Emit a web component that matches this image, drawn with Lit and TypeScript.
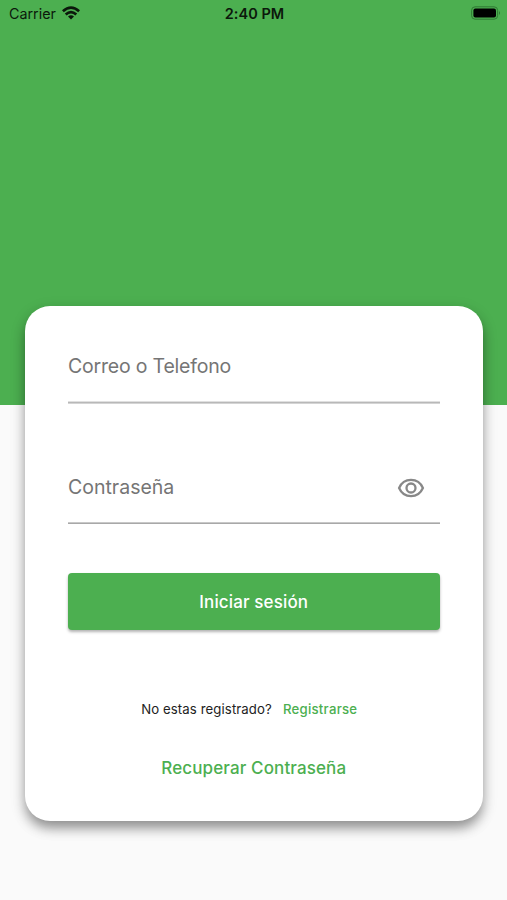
import { LitElement, html, css } from "lit";
import { customElement } from "lit/decorators.js";

@customElement("app-root")
class AppRoot extends LitElement {
  static styles = css`
    :host { display: block; height: 900px; overflow: hidden; font-family: Inter, sans-serif;
      background: linear-gradient(#4caf50 405px, #fafafa 405.5px); color: #222; }
    * { box-sizing: border-box; }
    .status { height: 28px; display: grid; grid-template-columns: 1fr auto 1fr; align-items: center; padding: 0 6px 2px 9px; color: #0b180b; font-size: 14.3px; }
    .left { display: flex; align-items: center; gap: 6px; }
    .time { font-weight: 600; font-size: 14.5px; letter-spacing: .05px; margin-right: 1px; }
    .battery { justify-self: end; }
    svg { display: block; }
    .card { margin: 278px 24.5px 0 25px; height: 515px; border-radius: 25px; background: #fff; padding: 0 43px;
      display: flex; flex-direction: column; box-shadow: 0 8px 12px -1px rgba(0,0,0,.34), 0 5px 16px rgba(0,0,0,.15); }
    .field { display: flex; justify-content: space-between; align-items: center; color: #757575; font-size: 19.5px; flex: none; }
    .line { height: 3px; flex: none; background: linear-gradient(#e0e0e0 1px, #b8b8b8 1px 2px, #d4d4d4 2px); }
    .line.second { height: 2px; background: linear-gradient(#c8c8c8 1px, #a8a8a8 1px); }
    .user { height: 95px; padding-top: 24px; letter-spacing: -.2px; }
    .pass { height: 118px; padding: 48px 15px 0 0; }
    .button { margin-top: 49px; height: 57px; padding: 0; border: 0; border-radius: 4px; background: #4caf50; color: #fff; font: 500 17px Inter, sans-serif; letter-spacing: .12px; box-shadow: 0 2px 3px rgba(0,0,0,.3); flex: none; }
    .eye { margin-top: 1px; }
    .signup { margin-top: 70px; height: 18px; display: flex; justify-content: center; align-items: center; gap: 11px; font-size: 13.2px; padding-right: 9px; letter-spacing: .1px; }
    .link { color: #4caf50; font-weight: 500; }
    .signup .link { letter-spacing: .25px; }
    .recover { margin-top: 37.5px; text-align: center; font-size: 17px; line-height: 24px; letter-spacing: .12px; }
  `;
  render() {
    return html`
      <div class="status">
        <div class="left"><span>Carrier</span>
          <svg width="18" height="14" viewBox="0 0 18 14" fill="none" stroke="#0b180b" stroke-width="2.7"><path d="M.9 5.2Q9-2 17.1 5.2M3.7 8.4q5.3-4.7 10.6 0"/><path d="M6 10.5q3-2.4 6 0L9 13.6z" fill="#0b180b" stroke="none"/></svg>
        </div>
        <span class="time">2:40 PM</span>
        <svg class="battery" width="30" height="14" viewBox="0 0 30 14"><rect x=".6" y=".8" width="26" height="12.4" rx="3.5" fill="none" stroke="#2f7a33"/><rect x="2.4" y="2.6" width="22.6" height="8.8" rx="2"/><path d="M28 5q2 1.9 0 4z" fill="#2f7a33"/></svg>
      </div>
      <main class="card">
        <div class="field user"><span>Correo o Telefono</span></div>
        <div class="line"></div>
        <div class="field pass"><span>Contraseña</span>
          <svg class="eye" width="28" height="20" viewBox="0 0 28 20" fill="none" stroke="#888" stroke-width="2.3"><path d="M2.1 10C4.3 4.9 8.8 1.9 14 1.9S23.7 4.9 25.9 10C23.7 15.1 19.2 18.1 14 18.1S4.3 15.1 2.1 10z"/><circle cx="14" cy="10" r="4.5"/></svg>
        </div>
        <div class="line second"></div>
        <button class="button">Iniciar sesión</button>
        <div class="signup"><span>No estas registrado?</span><span class="link">Registrarse</span></div>
        <div class="link recover">Recuperar Contraseña</div>
      </main>`;
  }
}
